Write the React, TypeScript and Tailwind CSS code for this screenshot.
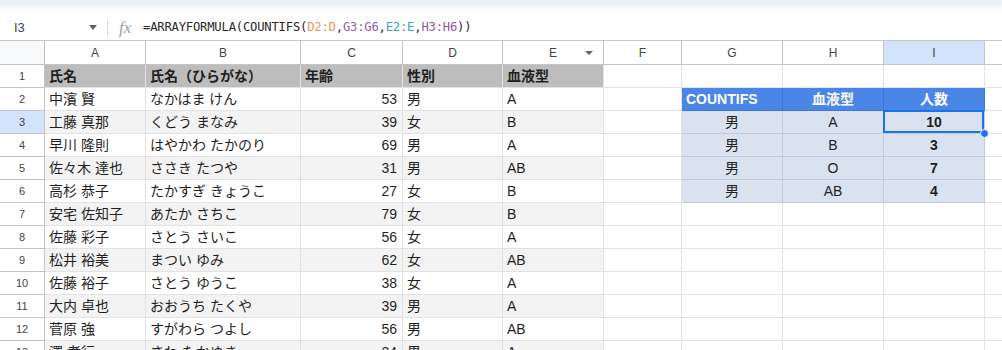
import React from "react";

const GRID =
  "grid grid-cols-[45px_101px_155px_102px_100px_101px_78px_101px_101px_101px_1fr]";

const jp = "font-['Liberation_Sans','Noto_Sans_CJK_JP',sans-serif]";

const people = [
  ["中濱 賢", "なかはま けん", 53, "男", "A"],
  ["工藤 真那", "くどう まなみ", 39, "女", "B"],
  ["早川 隆則", "はやかわ たかのり", 69, "男", "A"],
  ["佐々木 達也", "ささき たつや", 31, "男", "AB"],
  ["高杉 恭子", "たかすぎ きょうこ", 27, "女", "B"],
  ["安宅 佐知子", "あたか さちこ", 79, "女", "B"],
  ["佐藤 彩子", "さとう さいこ", 56, "女", "A"],
  ["松井 裕美", "まつい ゆみ", 62, "女", "AB"],
  ["佐藤 裕子", "さとう ゆうこ", 38, "女", "A"],
  ["大内 卓也", "おおうち たくや", 39, "男", "A"],
  ["菅原 強", "すがわら つよし", 56, "男", "AB"],
  ["澤 孝行", "さわ たかゆき", 34, "男", "A"],
];

// G..I summary block, keyed by sheet row
const summary: Record<number, [string, string, string]> = {
  2: ["COUNTIFS", "血液型", "人数"],
  3: ["男", "A", "10"],
  4: ["男", "B", "3"],
  5: ["男", "O", "7"],
  6: ["男", "AB", "4"],
};

const cell = "h-full flex items-center border-r border-b border-[#e2e2e2] text-[14px] text-[#1f1f1f] overflow-hidden whitespace-nowrap";

function FormulaBar() {
  return (
    <div className="h-[36px] flex items-center pt-[12px] pb-[2px] bg-[linear-gradient(#f3f4f6,#ffffff_9px)] border-b border-[#c7c7c7]">
      <div className="w-[107px] flex items-center pl-[14px] pr-[10px]">
        <span className="text-[13px] text-[#444] font-['Liberation_Sans',sans-serif]">I3</span>
        <span className="ml-auto w-0 h-0 border-l-[4px] border-r-[4px] border-t-[5px] border-l-transparent border-r-transparent border-t-[#5f6368]" />
      </div>
      <div className="w-px h-[16px] bg-[#dadce0]" />
      <span className="ml-[11px] w-[24px] text-[17px] italic text-[#9aa0a6] font-['Liberation_Serif',serif] leading-none">
        fx
      </span>
      <span className="text-[12.2px] text-[#2a2a2a] font-['DejaVu_Sans_Mono',monospace] tracking-[-0.2px]">
        =ARRAYFORMULA(COUNTIFS(
        <span className="text-[#e69a5c]">D2:D</span>,
        <span className="text-[#8f5fa8]">G3:G6</span>,
        <span className="text-[#3d9fc9]">E2:E</span>,
        <span className="text-[#8e5a8f]">H3:H6</span>))
      </span>
    </div>
  );
}

function ColumnHeaders() {
  const letters = ["A", "B", "C", "D", "E", "F", "G", "H", "I"];
  return (
    <div className={`${GRID} h-[24px] text-[12px] text-[#444] font-['Liberation_Sans',sans-serif]`}>
      <div className="bg-[#f8f9fa] border-r border-b border-[#c0c0c0]" />
      {letters.map((l) => (
        <div
          key={l}
          className={`relative flex items-center justify-center border-r border-b border-[#c4c4c4] ${
            l === "I" ? "bg-[#d3e3fd]" : "bg-white"
          }`}
        >
          {l}
          {l === "E" && (
            <span className="absolute right-[10px] top-[10px] w-0 h-0 border-l-[4px] border-r-[4px] border-t-[4px] border-l-transparent border-r-transparent border-t-[#5f6368]" />
          )}
        </div>
      ))}
      <div className="border-b border-[#c4c4c4] bg-white" />
    </div>
  );
}

function SummaryCells({ row }: { row: number }) {
  const s = summary[row];
  if (!s) {
    return (
      <>
        <div className={cell} />
        <div className={cell} />
        <div className={cell} />
      </>
    );
  }
  if (row === 2) {
    return (
      <>
        {s.map((t, i) => (
          <div
            key={i}
            className={`h-full flex items-center border-r border-b border-[#3f77d4] bg-[#4a86e8] text-white font-bold text-[14px] ${
              i === 0 ? "justify-start pl-[4px]" : "justify-center"
            }`}
          >
            {t}
          </div>
        ))}
      </>
    );
  }
  const blue = "h-full flex items-center justify-center border-r border-b border-[#c3cbdb] bg-[#dae2f0] text-[14px] text-[#1f1f1f]";
  return (
    <>
      <div className={blue}>{s[0]}</div>
      <div className={blue}>{s[1]}</div>
      <div className={`${blue} relative font-bold`}>
        {s[2]}
        {row === 3 && (
          <>
            <span className="absolute -left-px -top-px right-0 bottom-0 border-2 border-[#1a73e8]" />
            <span className="absolute -right-[5px] -bottom-[5px] w-[9px] h-[9px] rounded-full bg-[#1a73e8] border border-white z-10" />
          </>
        )}
      </div>
    </>
  );
}

function Row({ n }: { n: number }) {
  const header = n === 1;
  const p = people[n - 2];
  const band = header ? "bg-[#bdbdbd] font-bold" : n % 2 === 1 ? "bg-[#f3f3f3]" : "bg-white";
  const data = header ? ["氏名", "氏名（ひらがな）", "年齢", "性別", "血液型"] : p;
  return (
    <div className={`${GRID} h-[23px] ${jp}`}>
      <div
        className={`flex items-center justify-center border-r border-b border-[#c4c4c4] text-[11px] text-[#444] ${
          n === 3 ? "bg-[#d3e3fd]" : "bg-white"
        }`}
      >
        {n}
      </div>
      {data.map((v, i) => (
        <div
          key={i}
          className={`${cell} ${band} ${header ? "border-[#d0d0d0]" : ""} ${
            i === 2 && !header ? "justify-end pr-[5px]" : "pl-[4px]"
          }`}
        >
          {v}
        </div>
      ))}
      <div className={cell} />
      <SummaryCells row={n} />
      <div className="h-full border-b border-[#e2e2e2]" />
    </div>
  );
}

export default function App() {
  const rows = Array.from({ length: 13 }, (_, i) => i + 1);
  return (
    <div className="w-[1002px] h-[350px] overflow-hidden bg-white">
      <div className="h-[5px] bg-[#edf2fa]" />
      <FormulaBar />
      <ColumnHeaders />
      {rows.map((n) => (
        <Row key={n} n={n} />
      ))}
    </div>
  );
}
